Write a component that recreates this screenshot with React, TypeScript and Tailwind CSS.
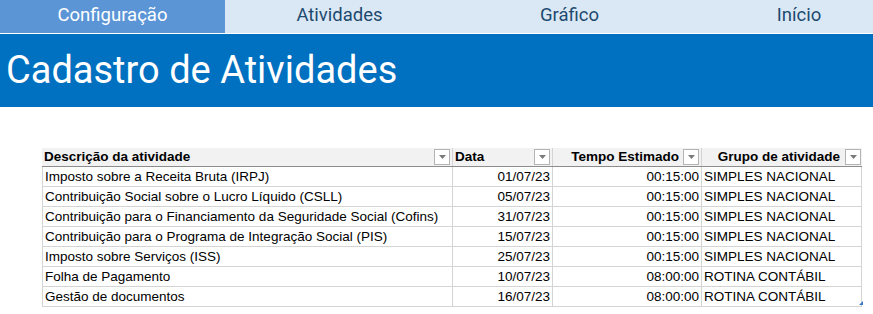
const rows = [
  { desc: "Imposto sobre a Receita Bruta (IRPJ)", data: "01/07/23", tempo: "00:15:00", grupo: "SIMPLES NACIONAL" },
  { desc: "Contribuição Social sobre o Lucro Líquido (CSLL)", data: "05/07/23", tempo: "00:15:00", grupo: "SIMPLES NACIONAL" },
  { desc: "Contribuição para o Financiamento da Seguridade Social (Cofins)", data: "31/07/23", tempo: "00:15:00", grupo: "SIMPLES NACIONAL" },
  { desc: "Contribuição para o Programa de Integração Social (PIS)", data: "15/07/23", tempo: "00:15:00", grupo: "SIMPLES NACIONAL" },
  { desc: "Imposto sobre Serviços (ISS)", data: "25/07/23", tempo: "00:15:00", grupo: "SIMPLES NACIONAL" },
  { desc: "Folha de Pagamento", data: "10/07/23", tempo: "08:00:00", grupo: "ROTINA CONTÁBIL" },
  { desc: "Gestão de documentos", data: "16/07/23", tempo: "08:00:00", grupo: "ROTINA CONTÁBIL" },
]

function FilterButton() {
  return (
    <div className="w-[16px] h-[16px] shrink-0 border border-[#b4b4b4] bg-white flex items-center justify-center">
      <svg width="7" height="4" viewBox="0 0 7 4">
        <path d="M0 0 L7 0 L3.5 4 Z" fill="#7a7a7a" />
      </svg>
    </div>
  )
}

export default function App() {
  return (
    <div className="w-[873px] h-[314px] bg-white overflow-hidden font-['Liberation_Sans',Arial,sans-serif]">
      {/* navegação */}
      <div className="flex h-[33px] text-[18.5px] font-['Roboto',sans-serif] overflow-hidden">
        <div className="w-[225px] shrink-0 bg-[#5b95d6] text-white flex items-center justify-center pb-[2px]">Configuração</div>
        <div className="w-[229px] shrink-0 bg-[#dae8f6] text-[#1d4a6e] flex items-center justify-center pb-[2px]">Atividades</div>
        <div className="w-[231px] shrink-0 bg-[#dae8f6] text-[#1d4a6e] flex items-center justify-center pb-[2px]">Gráfico</div>
        <div className="w-[228px] shrink-0 bg-[#dae8f6] text-[#1d4a6e] flex items-center justify-center pb-[2px]">Início</div>
      </div>
      <div className="h-px bg-white" />
      <div className="h-[73px] bg-[#0070c0] text-white text-[38px] font-['Roboto',sans-serif] pl-[6px] pt-[12px] leading-[48px]">
        Cadastro de Atividades
      </div>

      {/* tabela */}
      <div className="pt-[41px] pl-[42px] text-[13.5px] text-black">
        <div className="w-[820px] relative">
          <div className="flex h-[19px] bg-[#f2f2f2] font-bold border-b border-[#8c8c8c] items-center">
            <div className="w-[410px] flex items-center justify-between pl-[2px] pr-[2px]">
              <span>Descrição da atividade</span>
              <FilterButton />
            </div>
            <div className="w-[100px] flex items-center justify-between pl-[2px] pr-[2px] border-l border-[#d4d4d4] h-full">
              <span>Data</span>
              <FilterButton />
            </div>
            <div className="w-[149px] flex items-center justify-end gap-[4px] pr-[2px] border-l border-[#d4d4d4] h-full">
              <span>Tempo Estimado</span>
              <FilterButton />
            </div>
            <div className="w-[161px] flex items-center justify-end gap-[5px] pr-[1px] border-l border-[#d4d4d4] h-full">
              <span>Grupo de atividade</span>
              <FilterButton />
            </div>
          </div>
          {rows.map((r) => (
            <div key={r.desc} className="flex h-[20px] border-b border-[#d4d4d4]">
              <div className="w-[410px] pl-[2px] pt-[2px] h-full flex items-center border-l border-[#d4d4d4] whitespace-nowrap">{r.desc}</div>
              <div className="w-[100px] pr-[2px] pt-[2px] h-full flex items-center justify-end border-l border-[#d4d4d4]">{r.data}</div>
              <div className="w-[149px] pr-[2px] pt-[2px] h-full flex items-center justify-end border-l border-[#d4d4d4]">{r.tempo}</div>
              <div className="w-[161px] pl-[2px] pt-[2px] h-full flex items-center border-l border-r border-[#d4d4d4]">{r.grupo}</div>
            </div>
          ))}
          <svg className="absolute right-[-1px] bottom-[2px]" width="4" height="4" viewBox="0 0 4 4">
            <path d="M4 0 L4 4 L0 4 Z" fill="#3a78c4" />
          </svg>
        </div>
      </div>
    </div>
  )
}
